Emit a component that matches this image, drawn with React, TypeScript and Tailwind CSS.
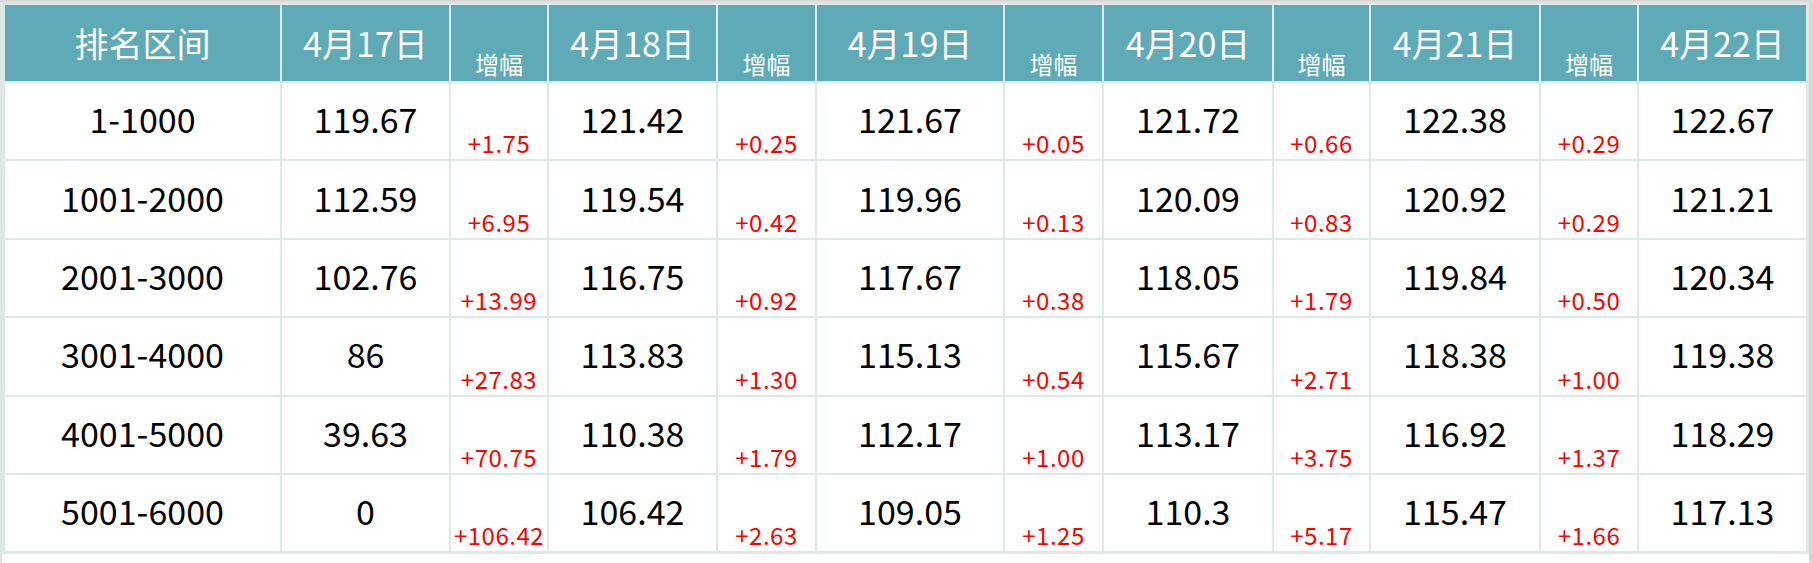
import React from "react";

const headers = ["排名区间", "4月17日", "增幅", "4月18日", "增幅", "4月19日", "增幅", "4月20日", "增幅", "4月21日", "增幅", "4月22日"];

const rows: string[][] = [
  ["1-1000", "119.67", "+1.75", "121.42", "+0.25", "121.67", "+0.05", "121.72", "+0.66", "122.38", "+0.29", "122.67"],
  ["1001-2000", "112.59", "+6.95", "119.54", "+0.42", "119.96", "+0.13", "120.09", "+0.83", "120.92", "+0.29", "121.21"],
  ["2001-3000", "102.76", "+13.99", "116.75", "+0.92", "117.67", "+0.38", "118.05", "+1.79", "119.84", "+0.50", "120.34"],
  ["3001-4000", "86", "+27.83", "113.83", "+1.30", "115.13", "+0.54", "115.67", "+2.71", "118.38", "+1.00", "119.38"],
  ["4001-5000", "39.63", "+70.75", "110.38", "+1.79", "112.17", "+1.00", "113.17", "+3.75", "116.92", "+1.37", "118.29"],
  ["5001-6000", "0", "+106.42", "106.42", "+2.63", "109.05", "+1.25", "110.3", "+5.17", "115.47", "+1.66", "117.13"],
];

const font = { fontFamily: '"Noto Sans CJK SC", "Noto Sans", sans-serif' };

export default function App() {
  return (
    <div className="w-[1813px] h-[563px] bg-white overflow-hidden" style={font}>
      <div className="h-[2px] bg-[#d9d9d9]" />
      <div className="flex h-[561px]">
        <div className="w-[2px] bg-[#dfe6e4]" />
        <div className="flex-1">
          <div className="grid grid-cols-[275px_167px_96px_167px_97px_186px_97px_168px_95px_168px_96px_167px] grid-rows-[76px_repeat(6,76.4px)] gap-[2px] p-[3px] bg-[#dde9e6] w-[1807px]">
            {headers.map((h, i) =>
              i === 0 || i % 2 === 1 ? (
                <div key={"h" + i} className="bg-[#5eaab6] text-white flex items-center justify-center text-[34px] leading-none">
                  {h}
                </div>
              ) : (
                <div key={"h" + i} className="bg-[#5eaab6] text-white flex items-end justify-center text-[24px] leading-none pb-[5px]">
                  {h}
                </div>
              )
            )}
            {rows.map((r, ri) =>
              r.map((c, ci) =>
                ci === 0 || ci % 2 === 1 ? (
                  <div key={ri + "-" + ci} className="bg-white text-black flex items-center justify-center text-[34px] leading-none pb-[4px]">
                    {c}
                  </div>
                ) : (
                  <div key={ri + "-" + ci} className="bg-white text-[#ff0000] flex items-end justify-center text-[24px] tracking-[0.5px] leading-none pb-[4px]">
                    {c}
                  </div>
                )
              )
            )}
          </div>
        </div>
        <div className="w-[4px] bg-[#d4d4d4]" />
      </div>
    </div>
  );
}
